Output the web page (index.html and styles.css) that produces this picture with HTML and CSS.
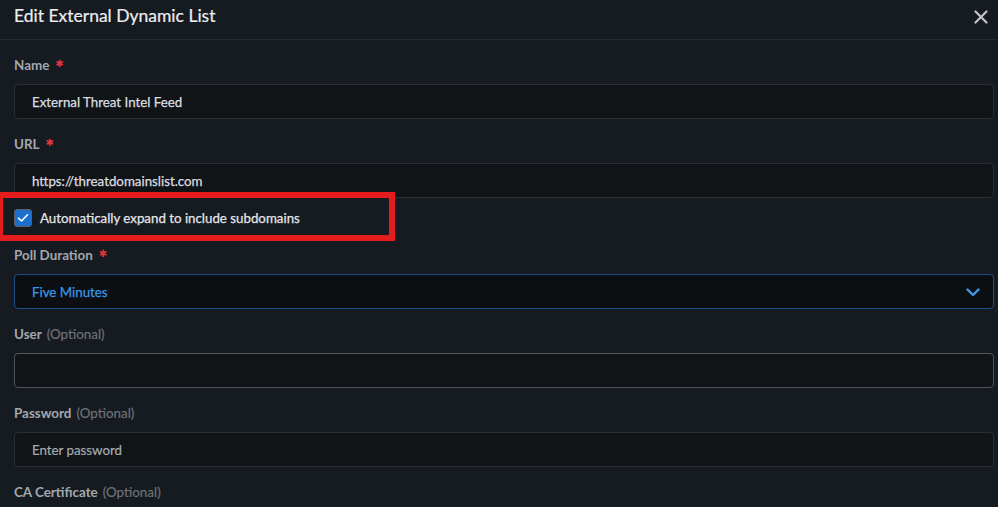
FILE: index.html
```html
<!DOCTYPE html>
<html>
<head>
<meta charset="utf-8">
<link rel="stylesheet" href="styles.css">
</head>
<body>
<div class="dialog">
  <div class="header">
    <h1 class="title">Edit External Dynamic List</h1>
    <button class="close" aria-label="Close">
      <svg width="14" height="14" viewBox="0 0 14 14"><path d="M1.5 1.5L12.5 12.5M12.5 1.5L1.5 12.5" stroke="#c3c6c9" stroke-width="2.2" stroke-linecap="round"/></svg>
    </button>
  </div>
  <div class="body">
    <div class="field">
      <div class="label">Name <span class="req">✱</span></div>
      <div class="input"><span class="value">External Threat Intel Feed</span></div>
    </div>
    <div class="field">
      <div class="label">URL <span class="req">✱</span></div>
      <div class="input"><span class="value">https://threatdomainslist.com</span></div>
    </div>
    <div class="check-row">
      <span class="checkbox">
        <svg width="12" height="10" viewBox="0 0 12 10"><path d="M1.5 5.2L4.5 8L10.5 1.8" fill="none" stroke="#ffffff" stroke-width="1.6" stroke-linecap="round" stroke-linejoin="round"/></svg>
      </span>
      <span class="check-text">Automatically expand to include subdomains</span>
      <div class="highlight"></div>
    </div>
    <div class="field">
      <div class="label">Poll Duration <span class="req">✱</span></div>
      <div class="input select"><span class="value blue">Five Minutes</span>
        <svg class="chev" width="14" height="9" viewBox="0 0 14 9"><path d="M1.5 1.5L7 7L12.5 1.5" fill="none" stroke="#3d9be9" stroke-width="2.4" stroke-linecap="round" stroke-linejoin="round"/></svg>
      </div>
    </div>
    <div class="field">
      <div class="label">User <span class="opt">(Optional)</span></div>
      <div class="input light"></div>
    </div>
    <div class="field">
      <div class="label">Password <span class="opt">(Optional)</span></div>
      <div class="input"><span class="value placeholder">Enter password</span></div>
    </div>
    <div class="field">
      <div class="label">CA Certificate <span class="opt">(Optional)</span></div>
    </div>
  </div>
</div>
</body>
</html>
```
FILE: styles.css
```css
* { box-sizing: border-box; }
html, body {
  margin: 0;
  padding: 0;
  background: #161a21;
  overflow: hidden;
}
body {
  font-family: Lato, "Noto Sans", sans-serif;
  color: #e2e4e6;
  width: 998px;
  height: 507px;
}
.dialog {
  display: flex;
  flex-direction: column;
}
.header {
  height: 40px;
  border-bottom: 1px solid #252930;
  display: flex;
  align-items: center;
  justify-content: space-between;
  padding: 0 10px 8px 14px;
}
.title {
  margin: 0;
  font-size: 17.5px;
  font-weight: 400;
  color: #eceef0;
  -webkit-text-stroke: 0.2px #eceef0;
}
.close {
  background: none;
  border: none;
  padding: 0;
  width: 14px;
  height: 14px;
  display: flex;
  margin-top: 3px;
}
.body {
  padding: 15px 4px 0 14px;
  display: flex;
  flex-direction: column;
}
.field {
  display: flex;
  flex-direction: column;
  gap: 9px;
  margin-bottom: 15px;
}
.label {
  height: 20px;
  line-height: 20px;
  font-size: 13.4px;
  font-weight: 700;
  color: #a3a8ad;
  display: flex;
  align-items: center;
  gap: 5px;
}
.req {
  color: #e0353a;
  font-family: "DejaVu Sans", sans-serif;
  font-size: 10px;
  line-height: 10px;
  margin-left: 1px;
  margin-top: -3px;
}
.opt {
  color: #6d7277;
  font-weight: 400;
  -webkit-text-stroke: 0.2px #6d7277;
}
.input {
  height: 35px;
  border: 1px solid #2b2f34;
  border-radius: 4px;
  background: #111417;
  display: flex;
  align-items: center;
  padding: 0 13px 0 17px;
}
.input.light {
  border-color: #50545a;
}
.input.select {
  background: #0b0f12;
  border-color: #1c4e85;
  justify-content: space-between;
}
.value {
  font-size: 13.3px;
  color: #dcdee0;
  -webkit-text-stroke: 0.25px #dcdee0;
}
.value.blue { color: #3d96e6; -webkit-text-stroke: 0.25px #3d96e6; }
.value.placeholder { color: #a7abaf; -webkit-text-stroke: 0.2px #a7abaf; }
.chev { margin-top: 1px; }
.check-row {
  position: relative;
  display: flex;
  align-items: center;
  gap: 8px;
  height: 18px;
  margin: -4px 0 18px 0;
}
.checkbox {
  width: 18px;
  height: 18px;
  border-radius: 3px;
  background: #1b6fcf;
  border: 1.5px solid #5d6166;
  display: flex;
  align-items: center;
  justify-content: center;
}
.check-text {
  font-size: 13.3px;
  color: #e4e6e8;
  -webkit-text-stroke: 0.25px #e4e6e8;
}
.highlight {
  position: absolute;
  left: -17px;
  top: -17px;
  width: 398px;
  height: 49px;
  border: 6px solid #e41c1c;
  pointer-events: none;
}
```
